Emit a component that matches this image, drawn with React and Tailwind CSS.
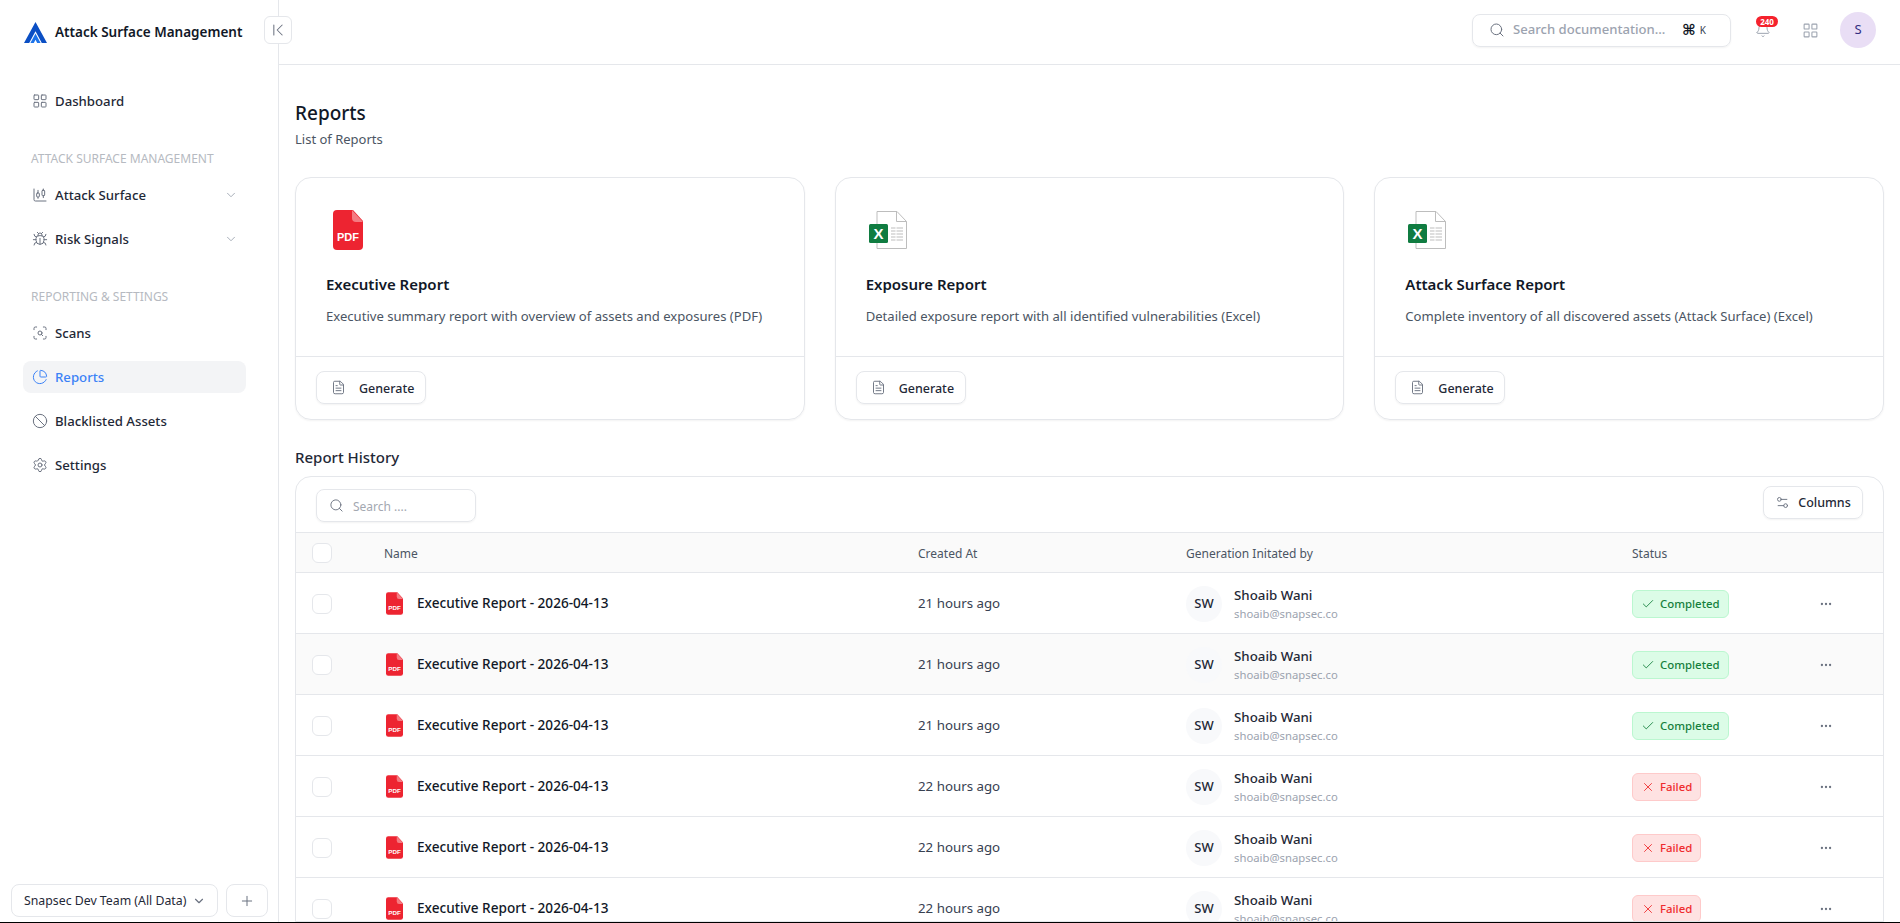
import {
  LayoutGrid,
  ChartCandlestick,
  Bug,
  ChevronDown,
  ChevronFirst,
  ScanSearch,
  ChartPie,
  Ban,
  Settings,
  Search,
  Bell,
  FileText,
  Settings2,
  Check,
  X,
  Ellipsis,
  Plus,
} from "lucide-react";

const cards = [
  { title: "Executive Report", desc: "Executive summary report with overview of assets and exposures (PDF)", type: "pdf" },
  { title: "Exposure Report", desc: "Detailed exposure report with all identified vulnerabilities (Excel)", type: "excel" },
  { title: "Attack Surface Report", desc: "Complete inventory of all discovered assets (Attack Surface) (Excel)", type: "excel" },
];

const rows = [
  { time: "21 hours ago", status: "Completed" },
  { time: "21 hours ago", status: "Completed", hover: true },
  { time: "21 hours ago", status: "Completed" },
  { time: "22 hours ago", status: "Failed" },
  { time: "22 hours ago", status: "Failed" },
  { time: "22 hours ago", status: "Failed" },
];

const gridCols = "grid grid-cols-[88px_534px_268px_446px_188px_1fr] items-center";

function Logo() {
  return (
    <svg width="23" height="21" viewBox="0 0 23 21" className="shrink-0">
      <path d="M11.5 0 23 21h-5.2L11.5 9.2 5.2 21H0z" fill="#0b4fc4" />
      <path d="M11.5 11.5 16.6 21h-3.4l-1.7-3.2L9.8 21H6.4z" fill="#1d74ea" />
    </svg>
  );
}

function PdfIcon({ width, height, label }) {
  return (
    <svg width={width} height={height} viewBox="0 0 30 40">
      <path d="M4 0h16l10 11v25a4 4 0 0 1-4 4H4a4 4 0 0 1-4-4V4a4 4 0 0 1 4-4z" fill="#ed2431" />
      <path d="M19 0l11 12h-7a4 4 0 0 1-4-4z" fill="#f47b82" />
      <text x="15" y="31" textAnchor="middle" fill="#fff" fontSize={label} fontWeight="700" fontFamily="'Liberation Sans', sans-serif">
        PDF
      </text>
    </svg>
  );
}

function ExcelIcon() {
  return (
    <svg width="38" height="38" viewBox="0 0 38 38">
      <path d="M8 .5h20l9.5 10v27H8z" fill="#fff" stroke="#bdbdbd" />
      <path d="M27.5.5v10h10" fill="none" stroke="#bdbdbd" />
      <path d="M22 17h12M22 20h12M22 23h12M22 26h12M22 29h12" stroke="#d4d4d4" strokeWidth="1.5" />
      <path d="M27 15v16" stroke="#fff" />
      <rect x="0" y="13" width="19" height="19" rx="1.5" fill="#107c41" />
      <text x="9.5" y="28" textAnchor="middle" fill="#fff" fontSize="15" fontWeight="700" fontFamily="'Liberation Sans', sans-serif">
        X
      </text>
    </svg>
  );
}

function NavItem({ icon: Icon, label, active, arrow }) {
  return (
    <div className={`h-8 rounded-lg flex items-center pl-[9px] pr-2 ${active ? "bg-[#f3f4f6]" : ""}`}>
      <Icon size={16} strokeWidth={1.5} className={active ? "text-[#3b82f6]" : "text-[#6b7280]"} />
      <span className={`ml-[7px] pt-[2px] text-[13.2px] font-medium ${active ? "text-[#3b82f6]" : "text-[#1f2937]"}`}>{label}</span>
      {arrow && <ChevronDown size={14} strokeWidth={1.5} className="ml-auto text-[#9ca3af]" />}
    </div>
  );
}

function Sidebar() {
  return (
    <aside className="relative w-[279px] shrink-0 border-r border-[#e5e7eb] flex flex-col">
      <div className="h-[64px] shrink-0 flex items-center pl-6 gap-2">
        <Logo />
        <span className="text-[13.5px] font-semibold text-[#111827] whitespace-nowrap">Attack Surface Management</span>
      </div>
      <button className="absolute left-[264px] top-4 w-7 h-7 bg-white border border-[#e5e7eb] rounded-md flex items-center justify-center text-[#6b7280]">
        <ChevronFirst size={20} strokeWidth={1.25} />
      </button>

      <nav className="pt-[21px] px-[23px] w-[269px] flex flex-col">
        <NavItem icon={LayoutGrid} label="Dashboard" />
        <div className="mt-[34px] mb-[12px] pl-2 h-4 leading-4 text-[12px] text-[#b6bac1] whitespace-nowrap">ATTACK SURFACE MANAGEMENT</div>
        <div className="flex flex-col gap-3">
          <NavItem icon={ChartCandlestick} label="Attack Surface" arrow />
          <NavItem icon={Bug} label="Risk Signals" arrow />
        </div>
        <div className="mt-[34px] mb-[12px] pl-2 h-4 leading-4 text-[12px] text-[#b6bac1] whitespace-nowrap">REPORTING &amp; SETTINGS</div>
        <div className="flex flex-col gap-3">
          <NavItem icon={ScanSearch} label="Scans" />
          <NavItem icon={ChartPie} label="Reports" active />
          <NavItem icon={Ban} label="Blacklisted Assets" />
          <NavItem icon={Settings} label="Settings" />
        </div>
      </nav>

      <div className="mt-auto pb-[5px] pl-[11px] flex gap-2">
        <div className="w-[207px] h-[33px] border border-[#e5e7eb] rounded-lg flex items-center justify-between pl-3 pr-[11px] text-[12.3px] text-[#1f2937] whitespace-nowrap">
          <span className="pt-[2px]">Snapsec Dev Team (All Data)</span>
          <ChevronDown size={14} className="text-[#6b7280]" />
        </div>
        <div className="w-[42px] h-[33px] border border-[#e5e7eb] rounded-lg flex items-center justify-center text-[#6b7280]">
          <Plus size={16} strokeWidth={1.5} />
        </div>
      </div>
    </aside>
  );
}

function Header() {
  return (
    <header className="h-[65px] shrink-0 border-b border-[#e5e7eb] flex items-center justify-end pr-6 pb-1">
      <div className="w-[259px] h-[33px] border border-[#e5e7eb] rounded-lg shadow-xs flex items-center pl-4 pr-6">
        <Search size={16} strokeWidth={1.5} className="text-[#6b7280]" />
        <span className="ml-2 text-[13.1px] font-medium text-[#9ca3af]">Search documentation...</span>
        <span className="ml-auto text-[15px] leading-4 font-bold text-[#111827] font-['DejaVu_Sans',sans-serif]">⌘</span>
        <span className="ml-1 text-[10px] text-[#374151]">K</span>
      </div>
      <div className="relative ml-6 w-4 h-4 text-[#9ca3af]">
        <Bell size={16} strokeWidth={1.5} />
        <span className="absolute -top-[6px] left-[1px] w-[22px] h-[11px] rounded-full bg-[#f5222d] text-white text-[8px] font-bold leading-[11px] text-center">240</span>
      </div>
      <LayoutGrid size={17} strokeWidth={1.5} className="ml-[31px] text-[#9ca3af]" />
      <div className="ml-[21px] w-9 h-9 rounded-full bg-[#e9def5] flex items-center justify-center text-[13px] text-[#312e81]">S</div>
    </header>
  );
}

function ReportCard({ card }) {
  return (
    <div className="h-[243px] border border-[#e5e7eb] rounded-2xl shadow-xs flex flex-col">
      <div className="h-[179px] shrink-0 border-b border-[#e5e7eb] pt-[28px] px-[30px]">
        <div className="h-12 flex items-center">
          {card.type === "pdf" ? (
            <div className="ml-[7px]">
              <PdfIcon width={30} height={40} label={11} />
            </div>
          ) : (
            <div className="ml-[3px]">
              <ExcelIcon />
            </div>
          )}
        </div>
        <div className="mt-[18px] text-[15px] leading-6 font-semibold text-[#111827]">{card.title}</div>
        <div className="mt-[10px] text-[13.1px] leading-5 text-[#4b5563] whitespace-nowrap">{card.desc}</div>
      </div>
      <div className="pt-[14px] pl-5">
        <button className="w-[110px] h-[33px] border border-[#e5e7eb] rounded-lg shadow-xs flex items-center pl-[14px] text-[12.5px] font-medium text-[#1f2937]">
          <FileText size={15} strokeWidth={1.5} className="text-[#6b7280]" />
          <span className="ml-[13px] pt-[3px]">Generate</span>
        </button>
      </div>
    </div>
  );
}

function Checkbox() {
  return <div className="w-5 h-5 ml-4 rounded-md border border-[#e5e7eb] bg-white" />;
}

function Row({ row }) {
  const done = row.status === "Completed";
  return (
    <div className={`${gridCols} h-[61px] shrink-0 border-b border-[#e5e7eb] pt-[1px] ${row.hover ? "bg-[#fafafa]" : "bg-white"}`}>
      <Checkbox />
      <div className="flex items-center pl-[2px]">
        <PdfIcon width={17} height={23} label={11} />
        <span className="ml-[14px] text-[13.6px] font-medium text-[#111827]">Executive Report - 2026-04-13</span>
      </div>
      <div className="text-[13.3px] text-[#374151]">{row.time}</div>
      <div className="flex items-center">
        <div className="w-9 h-9 rounded-full bg-[#f8f9fb] flex items-center justify-center text-[13px] font-medium text-[#1f2937]">SW</div>
        <div className="ml-3">
          <div className="text-[13.3px] leading-5 font-medium text-[#1f2937]">Shoaib Wani</div>
          <div className="text-[11.3px] leading-4 mt-[1px] text-[#9ca3af]">shoaib@snapsec.co</div>
        </div>
      </div>
      <div>
        {done ? (
          <span className="inline-flex items-center h-[28px] px-2 rounded-md bg-[#dcfce7] border border-[#bbf7d0] text-[11.4px] font-medium text-[#15803d]">
            <Check size={14} strokeWidth={1.5} />
            <span className="ml-[5px]">Completed</span>
          </span>
        ) : (
          <span className="inline-flex items-center h-[28px] px-2 rounded-md bg-[#fee2e2] border border-[#fecaca] text-[11.4px] font-medium text-[#ef2b2d]">
            <X size={14} strokeWidth={1.5} />
            <span className="ml-[5px]">Failed</span>
          </span>
        )}
      </div>
      <Ellipsis size={14} className="ml-[-1px] text-[#6b7280]" />
    </div>
  );
}

function HistoryTable() {
  return (
    <div className="mt-[7px] border border-[#e5e7eb] rounded-t-2xl flex-1 flex flex-col overflow-hidden">
      <div className="h-[56px] shrink-0 flex justify-between border-b border-[#e5e7eb] pl-5 pr-5">
        <div className="mt-3 w-[160px] h-[33px] border border-[#e5e7eb] rounded-lg shadow-xs flex items-center pl-[12px]">
          <Search size={15} strokeWidth={1.5} className="text-[#6b7280]" />
          <span className="ml-[9px] pt-[2px] text-[12px] text-[#a3a8b1]">Search ....</span>
        </div>
        <button className="mt-[9px] w-[100px] h-[33px] border border-[#e5e7eb] rounded-lg shadow-xs flex items-center justify-center gap-2 text-[12.5px] font-medium text-[#1f2937]">
          <Settings2 size={15} strokeWidth={1.5} className="text-[#6b7280]" />
          <span className="pt-[2px]">Columns</span>
        </button>
      </div>
      <div className={`${gridCols} h-10 shrink-0 bg-[#fafafa] border-b border-[#e5e7eb] pt-[1px] text-[12px] text-[#4b5563]`}>
        <Checkbox />
        <div className="pt-[1px]">Name</div>
        <div className="pt-[1px]">Created At</div>
        <div className="pt-[1px]">Generation Initated by</div>
        <div className="pt-[1px]">Status</div>
        <div />
      </div>
      {rows.map((row, i) => (
        <Row key={i} row={row} />
      ))}
    </div>
  );
}

export default function App() {
  return (
    <div className="h-screen w-screen flex overflow-hidden bg-white border-b border-black font-['Noto_Sans',sans-serif]">
      <Sidebar />
      <div className="flex-1 min-w-0 flex flex-col">
        <Header />
        <main className="flex-1 min-h-0 flex flex-col pl-4 pr-4 pt-[34px]">
          <h1 className="text-[19px] leading-7 font-medium text-[#111827]">Reports</h1>
          <p className="mt-[2px] text-[13px] leading-5 text-[#4b5563]">List of Reports</p>
          <div className="mt-[28px] grid grid-cols-3 gap-[30px]">
            {cards.map((card) => (
              <ReportCard key={card.title} card={card} />
            ))}
          </div>
          <h2 className="mt-[25px] text-[15px] leading-6 font-medium text-[#1f2937]">Report History</h2>
          <HistoryTable />
        </main>
      </div>
    </div>
  );
}
